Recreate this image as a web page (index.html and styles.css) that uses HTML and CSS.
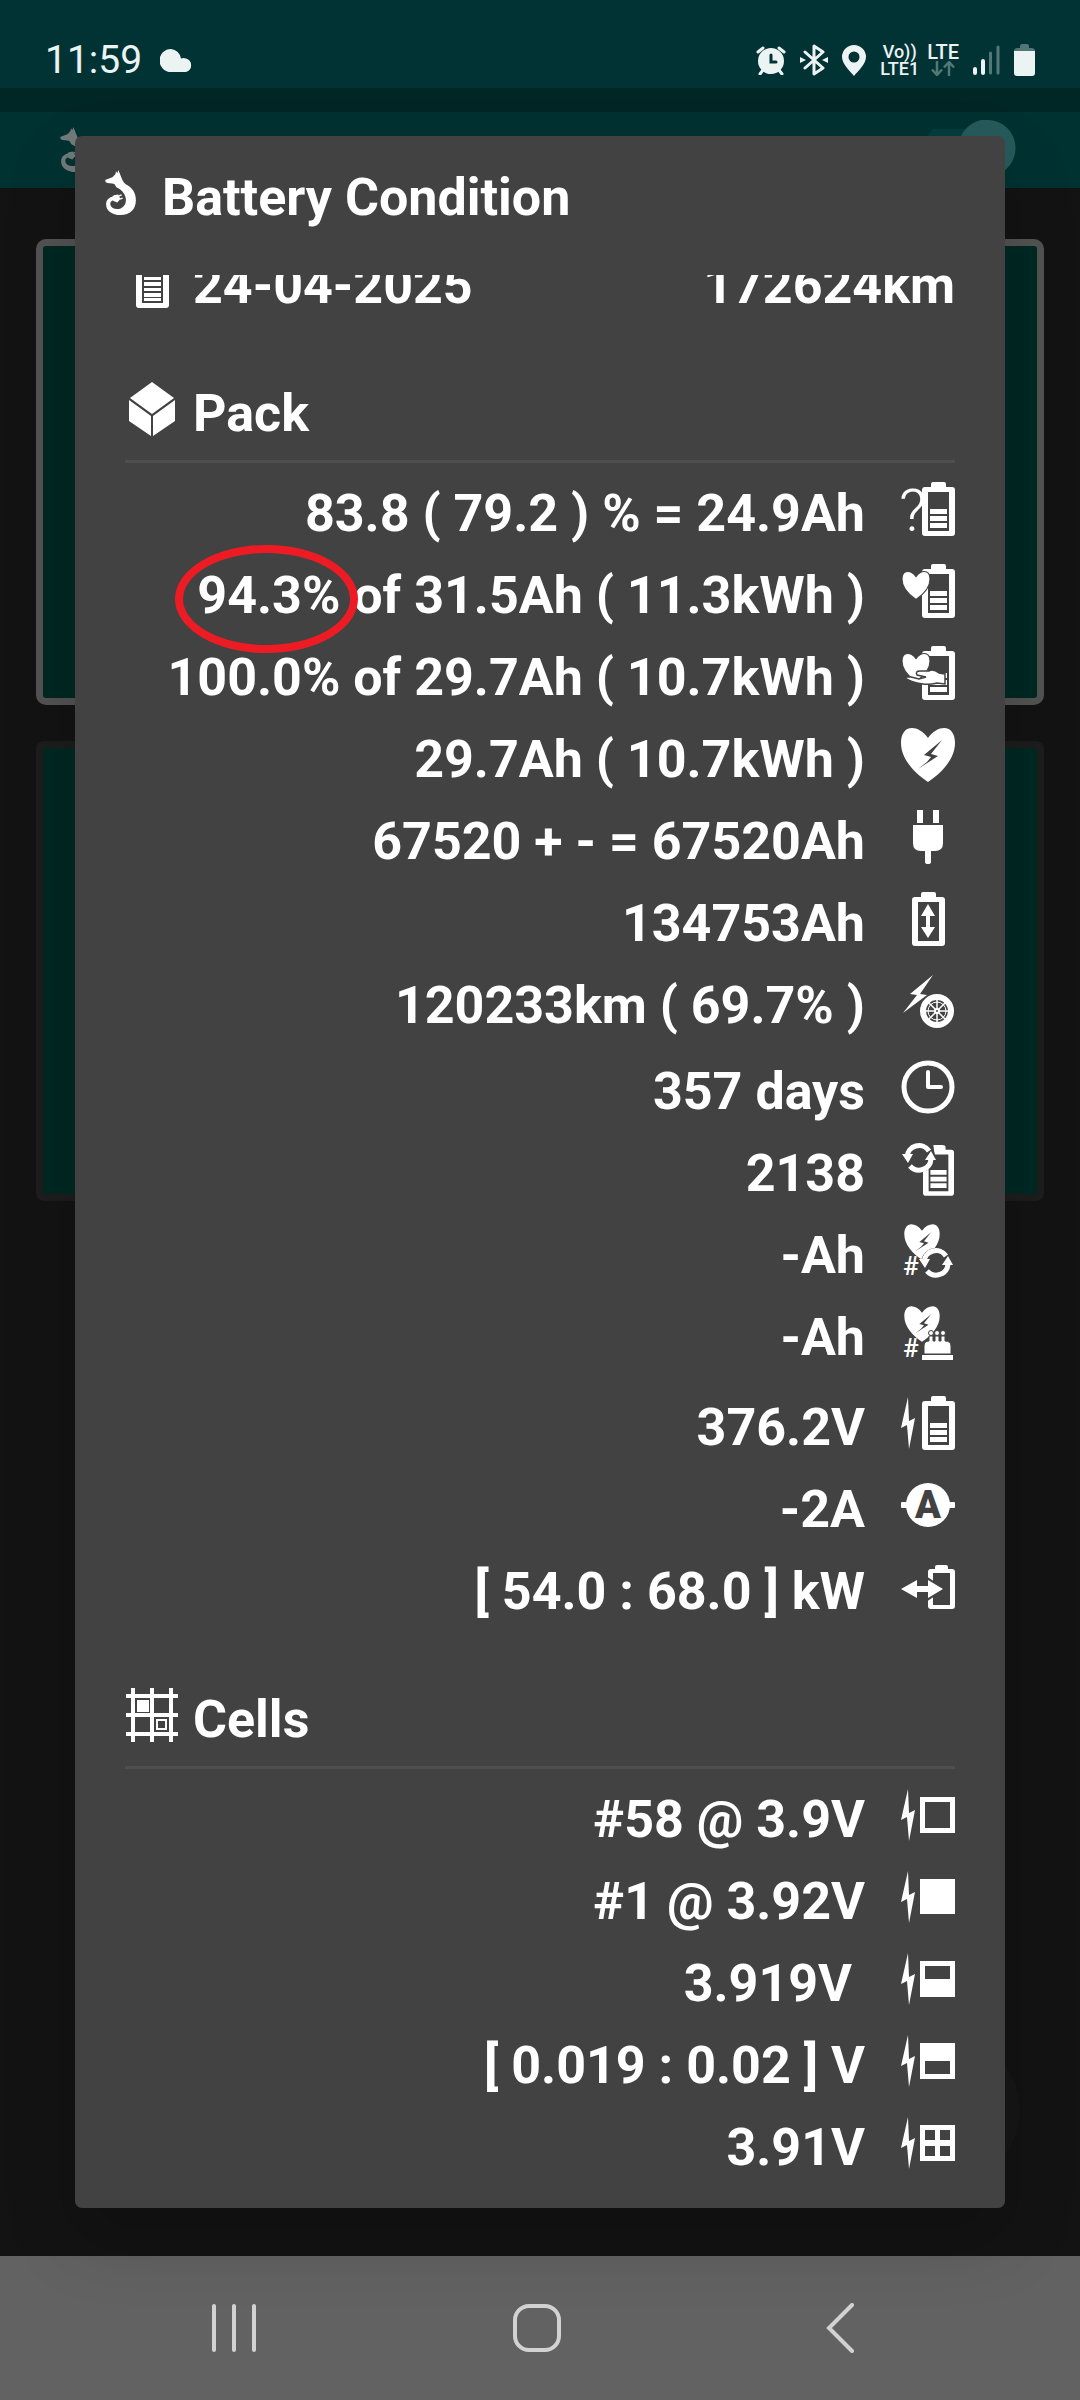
FILE: index.html
```html
<!DOCTYPE html>
<html lang="en">
<head>
  <meta charset="UTF-8">
  <meta name="viewport" content="width=device-width, initial-scale=1.0">
  <title>Battery Condition</title>
  <link rel="stylesheet" href="styles.css">
</head>
<body>

<!-- shapes used by more than one icon -->
<svg class="defs" width="0" height="0" aria-hidden="true">
  <symbol id="fox" viewBox="0 0 93 136">
    <path d="M0 30 22 22 31 13 33 4 37 10 40 0 45 12C50 24 53 36 62 43 82 53 93 68 93 92 93 118 75 136 47 136 20 136 3 122 3 104 3 92 10 85 20 81L27 91C18 93 14 98 16 106 19 116 34 121 47 116 60 110 65 98 62 84 59 70 50 60 34 52L28 42C20 40 8 41 2 37Z"/>
    <path d="M20 82 26 76 40 74 46 88 37 98 25 94Z"/>
    <path d="M41 79 50 75M44 88 53 85" stroke="currentColor" stroke-width="4"/>
  </symbol>
  <symbol id="battery" viewBox="0 0 33 54">
    <path fill-rule="evenodd" d="M9 5V2Q9 0 11 0H22Q24 0 24 2V5H30Q33 5 33 8V51Q33 54 30 54H3Q0 54 0 51V8Q0 5 3 5ZM6 10V49H27V10Z"/>
  </symbol>
  <symbol id="bars" viewBox="0 0 17 20">
    <path d="M0 0H17V5H0ZM0 7H17V12H0ZM0 14H17V19H0Z"/>
  </symbol>
  <symbol id="heart" viewBox="-2 -2 58 58">
    <path d="M27 10C32 3 38 0 43 0 50 0 54 6 54 15 54 30 42 44 27 54 12 44 0 30 0 15 0 6 4 0 11 0 16 0 22 3 27 10Z"/>
  </symbol>
  <symbol id="bolt" viewBox="0 0 14 54">
    <path d="M7 1 0 32 6 29 8 53 14 22 8 25Z"/>
  </symbol>
  <symbol id="heart-bolt" viewBox="-2 -2 58 58">
    <path d="M27 10C32 3 38 0 43 0 50 0 54 6 54 15 54 30 42 44 27 54 12 44 0 30 0 15 0 6 4 0 11 0 16 0 22 3 27 10Z"/>
    <path class="cut" d="M41 12 23 27 30 29 26 34 17 41 37 28 30 26Z"/>
  </symbol>
  <symbol id="cycle" viewBox="0 0 34 32">
    <g fill="none" stroke="currentColor" stroke-width="5">
      <path d="M5 15A12 12 0 0 1 27 9"/>
      <path d="M29 17A12 12 0 0 1 8 24"/>
    </g>
    <path d="M0 12H11L6 21ZM23 18H34L29 9Z"/>
  </symbol>
</svg>

<header class="status-bar">
  <div class="status-left">
    <time>11:59</time>
    <svg width="33" height="23" viewBox="0 0 33 23"><path d="M11 0a11 11 0 0 1 10 9.500 8 8 0 0 1 5 0 7 7 0 0 1 0 13.500H11A11 11 0 0 1 11 0Z"/></svg>
  </div>
  <div class="status-right">
    <svg width="30" height="30" viewBox="0 0 30 30">
      <circle cx="15" cy="16" r="13"/>
      <path d="M2 7 7 3M23 3l5 4M7 25l-3 4M23 25l3 4" stroke="currentColor" stroke-width="3" stroke-linecap="round"/>
      <path d="M15 10v7h5" fill="none" stroke="#013334" stroke-width="3" stroke-linecap="round"/>
    </svg>
    <svg width="28" height="32" viewBox="0 0 28 32">
      <path d="M5 8 23 24 14 30V2L23 8 5 24" fill="none" stroke="currentColor" stroke-width="3" stroke-linejoin="round" stroke-linecap="round"/>
      <path d="M0 13 6 16 0 19ZM28 13 22 16 28 19Z"/>
    </svg>
    <svg width="24" height="31" viewBox="0 0 24 31">
      <path fill-rule="evenodd" d="M12 0A12 12 0 0 1 24 12C24 19 16 26 12 31 8 26 0 19 0 12A12 12 0 0 1 12 0ZM12 6.500A5.500 5.500 0 1 0 12 17.500 5.500 5.500 0 0 0 12 6.500Z"/>
    </svg>
    <div class="network">
      <div class="volte">
        <span>Vo))</span>
        <span>LTE1</span>
      </div>
      <div class="lte">
        <span>LTE</span>
        <svg class="dim" width="24" height="15" viewBox="0 0 24 15"><path d="M6 0V14M1 8.500 6 14 11 8.500M18 15V1M13 6.500 18 1 23 6.500" fill="none" stroke="currentColor" stroke-width="2.500"/></svg>
      </div>
    </div>
    <svg width="27" height="30" viewBox="0 0 27 30">
      <path d="M2 24V28M10 16V28" stroke="currentColor" stroke-width="4" stroke-linecap="round"/>
      <path class="dim" d="M17.500 8V28M25 2V28" stroke="currentColor" stroke-width="3" stroke-linecap="round"/>
    </svg>
    <svg width="21" height="32" viewBox="0 0 21 32">
      <path class="dim" d="M0 7Q0 4 4 4H6V2Q6 0 8 0H13Q15 0 15 2V4H17Q21 4 21 7Z"/>
      <path d="M0 7H21V29Q21 32 18 32H3Q0 32 0 29Z"/>
    </svg>
  </div>
</header>

<main class="screen">
  <div class="app">
    <div class="app-bar">
      <svg class="app-logo" width="31" height="45"><use href="#fox"/></svg>
      <label class="switch"><input type="checkbox" checked aria-label="Connection"></label>
    </div>
    <div class="tiles">
      <div class="tile selected"></div>
      <div class="tile"></div>
    </div>
    <div class="fab"></div>
  </div>

  <section class="dialog" role="dialog" aria-labelledby="dialog-title">
    <div class="dialog-head">
      <svg width="31" height="45"><use href="#fox"/></svg>
      <h1 id="dialog-title">Battery Condition</h1>
    </div>

    <div class="dialog-scroll">
      <div class="heading summary">
        <svg class="icon" viewBox="0 0 54 54">
          <use href="#battery" x="11" width="33" height="54"/>
          <path d="M19 17H36V21H19ZM19 23H36V26H19ZM19 28H36V32H19ZM19 34H36V37H19ZM19 39H36V43H19ZM19 44H36V47H19Z"/>
        </svg>
        <span>24-04-2025</span>
        <span class="odometer">172624km</span>
      </div>

      <div class="heading titled">
        <svg class="icon" viewBox="0 0 54 54">
          <path d="M27 0 49 16 27 32 5 16ZM4 18 26 34V54L4 39ZM50 18 28 34V54L50 39Z"/>
        </svg>
        <h2>Pack</h2>
      </div>
      <ul class="readings">
        <li>83.8 ( 79.2 ) % = 24.9Ah
          <svg class="icon" viewBox="0 0 54 54">
            <text x="-2" y="49" font-size="60" font-weight="300">?</text>
            <use href="#battery" x="21" width="33" height="54"/>
            <use href="#bars" x="29" y="27" width="17" height="20"/>
          </svg>
        </li>
        <li><span><span class="marked">94.3%</span> of 31.5Ah ( 11.3kWh )</span>
          <svg class="icon" viewBox="0 0 54 54">
            <use href="#battery" x="21" width="33" height="54"/>
            <use href="#bars" x="29" y="27" width="17" height="20"/>
            <use class="outlined" href="#heart" y="6" width="30" height="31"/>
          </svg>
        </li>
        <li>100.0% of 29.7Ah ( 10.7kWh )
          <svg class="icon" viewBox="0 0 54 54">
            <use href="#battery" x="21" width="33" height="54"/>
            <use href="#bars" x="29" y="27" width="17" height="20"/>
            <use class="outlined" href="#heart" y="6" width="30" height="31"/>
            <path d="M3 31 10 31 18 33 25 31 16 29Q14 25 19 25L28 25Q32 22 38 27L44 28V38L36 37Q29 39 22 38 9 36 3 31Z" stroke="#424242" stroke-width="1.500"/>
          </svg>
        </li>
        <li>29.7Ah ( 10.7kWh )
          <svg class="icon" viewBox="0 0 54 54"><use href="#heart-bolt" x="-2" y="-2" width="58" height="58"/></svg>
        </li>
        <li>67520 + - = 67520Ah
          <svg class="icon" viewBox="0 0 54 54">
            <path d="M16 0H22V13H16ZM32 0H38V13H32ZM12 15H42V33Q42 41 34 41H30V52Q30 54 27 54 24 54 24 52V41H20Q12 41 12 33Z"/>
          </svg>
        </li>
        <li>134753Ah
          <svg class="icon" viewBox="0 0 54 54">
            <use href="#battery" x="11" width="33" height="54"/>
            <path d="M27 12 34 24H29V35H34L27 46 20 35H25V24H20Z"/>
          </svg>
        </li>
        <li>120233km ( 69.7% )
          <svg class="icon" viewBox="0 0 54 54">
            <path d="M32 1 9 20 16 21 2 39 26 21 19 20Z"/>
            <circle cx="36" cy="37" r="14" fill="none" stroke="currentColor" stroke-width="6"/>
            <g fill="none" stroke="currentColor">
              <circle cx="36" cy="37" r="9"/>
              <path d="M36 26V48M25 37H47M28 29 44 45M44 29 28 45" stroke-width="1.500"/>
            </g>
            <circle cx="36" cy="37" r="3"/>
            <circle class="cut" cx="36" cy="37" r="1"/>
          </svg>
        </li>
      </ul>
      <ul class="readings lifetime">
        <li>357 days
          <svg class="icon" viewBox="0 0 54 54">
            <g fill="none" stroke="currentColor" stroke-width="5">
              <circle cx="27" cy="27" r="24"/>
              <path d="M27 12V27H40" stroke-width="4" stroke-linecap="round" stroke-linejoin="round"/>
            </g>
          </svg>
        </li>
        <li>2138
          <svg class="icon" viewBox="0 0 54 54">
            <use href="#battery" x="22" y="3" width="31" height="51"/>
            <use href="#bars" x="29" y="28" width="17" height="19"/>
            <circle class="cut" cx="19" cy="15" r="15"/>
            <path d="M26 6V3H42V9H30V15H26Z"/>
            <path class="cut" d="M20 6 32 0 34 16 20 22Z"/>
            <use href="#cycle" x="1" y="0" width="34" height="32"/>
          </svg>
        </li>
        <li>-Ah
          <svg class="icon" viewBox="0 0 54 54">
            <use href="#heart-bolt" x="2" y="-1" width="38" height="38"/>
            <text x="2" y="51" font-size="26" font-weight="500">#</text>
            <circle class="cut" cx="35" cy="39" r="15"/>
            <use href="#cycle" x="18" y="23" width="34" height="32"/>
          </svg>
        </li>
        <li>-Ah
          <svg class="icon" viewBox="0 0 54 54">
            <use href="#heart-bolt" x="2" y="-1" width="38" height="38"/>
            <text x="2" y="51" font-size="26" font-weight="500">#</text>
            <path d="M23 48V40Q23 35 28 35V30H32V35H34V30H38V35H40V30H44V35Q50 35 50 40V48Z" stroke="#424242" stroke-width="1"/>
            <path d="M21 49H52V54H21Z"/>
            <g stroke="#424242"><circle cx="30" cy="27" r="2.500"/><circle cx="36" cy="27" r="2.500"/><circle cx="42" cy="27" r="2.500"/></g>
          </svg>
        </li>
      </ul>
      <ul class="readings power">
        <li>376.2V
          <svg class="icon" viewBox="0 0 54 54">
            <use href="#bolt" width="14" height="54"/>
            <use href="#battery" x="21" width="33" height="54"/>
            <use href="#bars" x="29" y="27" width="17" height="20"/>
          </svg>
        </li>
        <li>-2A
          <svg class="icon" viewBox="0 0 54 54">
            <rect y="24" width="54" height="6" rx="1"/>
            <circle cx="27" cy="27" r="22"/>
            <text class="cut" x="27" y="40" font-size="38" font-weight="900" text-anchor="middle">A</text>
          </svg>
        </li>
        <li>[ 54.0 : 68.0 ] kW
          <svg class="icon" viewBox="0 0 54 54">
            <path fill-rule="evenodd" d="M34 9V7Q34 5 36 5H45Q47 5 47 7V9H51Q54 9 54 12V46Q54 49 51 49H30Q27 49 27 46V12Q27 9 30 9ZM32 13V45H49V13Z"/>
            <path class="cut" d="M25 16 34 22V36L25 42Z"/>
            <path d="M0 29 16 20V26H27V20L42 29 27 38V32H16V38Z"/>
          </svg>
        </li>
      </ul>

      <div class="heading titled">
        <svg class="icon" viewBox="0 0 54 54">
          <path d="M8 0V54M27 0V54M46 0V54M1 8H53M1 27H53M1 46H53" stroke="currentColor" stroke-width="4"/>
          <path d="M12 12H24V24H12Z"/>
          <rect x="32" y="32" width="9" height="9" fill="none" stroke="currentColor" stroke-width="2"/>
        </svg>
        <h2>Cells</h2>
      </div>
      <ul class="readings">
        <li>#58 @ 3.9V
          <svg class="icon" viewBox="0 0 54 54">
            <use href="#bolt" width="14" height="54"/>
            <path fill-rule="evenodd" d="M19 9H54V45H19ZM24 14V40H49V14Z"/>
          </svg>
        </li>
        <li>#1 @ 3.92V
          <svg class="icon" viewBox="0 0 54 54">
            <use href="#bolt" width="14" height="54"/>
            <path d="M19 9H54V44H19Z"/>
          </svg>
        </li>
        <li><span class="value">3.919V </span>
          <svg class="icon" viewBox="0 0 54 54">
            <use href="#bolt" width="14" height="54"/>
            <path fill-rule="evenodd" d="M19 9H54V45H19ZM24 14V27H49V14Z"/>
          </svg>
        </li>
        <li>[ 0.019 : 0.02 ] V
          <svg class="icon" viewBox="0 0 54 54">
            <use href="#bolt" width="14" height="54"/>
            <path fill-rule="evenodd" d="M19 9H54V45H19ZM24 27V40H49V27Z"/>
          </svg>
        </li>
        <li>3.91V
          <svg class="icon" viewBox="0 0 54 54">
            <use href="#bolt" width="14" height="54"/>
            <path fill-rule="evenodd" d="M19 9H54V45H19ZM24 14V24H34V14ZM39 14V24H49V14ZM24 30V40H34V30ZM39 30V40H49V30Z"/>
          </svg>
        </li>
      </ul>
    </div>
  </section>
</main>

<nav class="nav-bar">
  <button type="button" aria-label="Recent apps">
    <svg width="44" height="48" viewBox="0 0 44 48"><path d="M2 2V46M22 2V46M42 2V46"/></svg>
  </button>
  <button type="button" aria-label="Home">
    <svg width="48" height="48" viewBox="0 0 48 48"><rect x="2" y="2" width="44" height="44" rx="14"/></svg>
  </button>
  <button type="button" aria-label="Back">
    <svg width="28" height="50" viewBox="0 0 28 50"><path d="M26 2 3 25 26 48"/></svg>
  </button>
</nav>

</body>
</html>
```
FILE: styles.css
```css
* { box-sizing: border-box; }
body {
  margin: 0;
  min-height: 100vh;
  display: flex;
  flex-direction: column;
  background: #131313;
  color: #fff;
  font-family: Roboto, "Liberation Sans", sans-serif;
}
h1, h2, ul {
  margin: 0;
  padding: 0;
  font-size: inherit;
  font-weight: inherit;
}
svg {
  display: block;
  flex: none;
  fill: currentColor;
}
.defs { position: absolute; }
.cut { fill: #424242; }
.dim { opacity: 0.35; }

/* status bar */
.status-bar {
  height: 88px;
  padding: 32px 45px 0;
  display: flex;
  justify-content: space-between;
  align-items: center;
  background: #013334;
  color: #ecf3f3;
}
.status-left, .status-right {
  display: flex;
  align-items: center;
}
.status-left { gap: 18px; font-size: 39px; }
.status-right { gap: 14px; }
.network {
  display: flex;
  gap: 8px;
  font-weight: 500;
}
.volte, .lte {
  display: flex;
  flex-direction: column;
  align-items: center;
}
.volte { font-size: 18px; line-height: 17px; }
.lte { font-size: 20px; line-height: 18px; }

/* app behind the dialog */
.screen {
  flex: 1;
  display: grid;
  position: relative;
  z-index: 1;
}
.app, .dialog { grid-area: 1 / 1; }
.app { position: relative; }
.app-bar {
  height: 100px;
  border-top: 24px solid #002625;
  padding: 8px 64px 0 60px;
  display: flex;
  justify-content: space-between;
  background: #003232;
}
.app-logo {
  margin-top: 7px;
  color: #737b7a;
}
.switch input {
  appearance: none;
  display: block;
  width: 91px;
  height: 57px;
  margin: 0;
  background:
    radial-gradient(circle at 62px 28px, #265b5b 28px, transparent 29px),
    linear-gradient(#043c3c, #043c3c) 0 9px / 70px 38px no-repeat;
  border-radius: 28px;
}
.tiles {
  padding: 51px 36px;
  display: grid;
  gap: 36px;
}
.tile {
  height: 460px;
  border: 7px solid #1d1d1d;
  border-radius: 8px;
  background: #002823;
}
.tile.selected {
  height: 466px;
  border-color: #535353;
  border-radius: 10px;
}
.fab {
  position: absolute;
  right: 60px;
  bottom: 71px;
  width: 150px;
  height: 150px;
  border-radius: 50%;
  background: #161616;
}

/* dialog */
.dialog {
  position: relative;
  margin: 48px 75px;
  padding-bottom: 24px;
  border-radius: 7px;
  background: #424242;
  box-shadow: 0 30px 70px rgba(0,0,0,0.18);
  font-size: 52px;
  font-weight: 700;
  line-height: 64px;
}
.dialog-head {
  padding: 30px 30px 45px;
  display: flex;
  gap: 26px;
}
.dialog-head svg { margin-top: 4px; }
.dialog-scroll {
  padding: 0 50px;
  overflow: hidden;
}
.icon {
  width: 54px;
  height: 54px;
}
.heading {
  display: flex;
  gap: 14px;
  padding-top: 14px;
}
/* scrolled halfway under the dialog title */
.summary { margin-top: -35px; }
.odometer { margin-left: auto; }
.titled {
  margin: 60px 0 5px;
  padding: 0 0 14px;
  border-bottom: 3px solid #4f4f4f;
}
.summary + .titled { margin-top: 64px; }
.readings { list-style: none; }
.readings li {
  display: flex;
  justify-content: flex-end;
  gap: 36px;
  padding: 14px 0 4px;
}
.lifetime { padding-top: 4px; }
.power { padding-top: 8px; }
.value { white-space: pre; }
.outlined {
  stroke: #424242;
  stroke-width: 2px;
}
.marked { position: relative; }
.marked::after {
  content: "";
  position: absolute;
  inset: -20px -18px -27px -22px;
  border: 8px solid #ed1c24;
  border-radius: 50%;
}

/* navigation bar */
.nav-bar {
  height: 144px;
  padding: 0 88px 0 82px;
  display: grid;
  grid-template-columns: repeat(3, 1fr);
  background: #626262;
}
.nav-bar button {
  display: grid;
  place-items: center;
  border: none;
  background: none;
  color: #d2d2d2;
}
.nav-bar svg {
  fill: none;
  stroke: currentColor;
  stroke-width: 4px;
  stroke-linecap: round;
}
```
